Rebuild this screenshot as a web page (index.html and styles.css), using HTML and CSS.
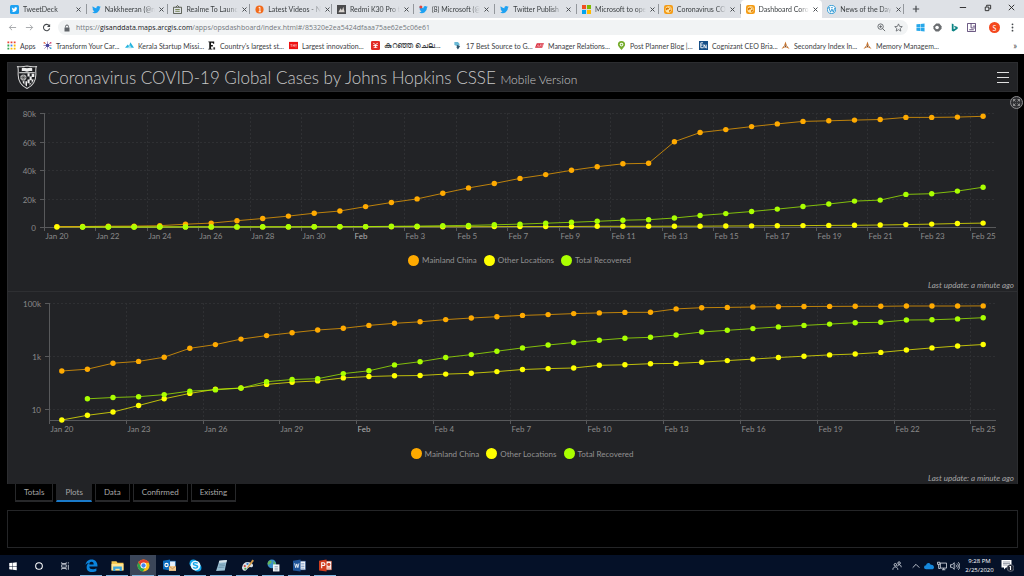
FILE: index.html
```
<!DOCTYPE html>
<html lang="en">
<head>
    <meta charset="UTF-8">
    <meta name="viewport" content="width=device-width, initial-scale=1.0">
    <title>Coronavirus COVID-19 Global Cases</title>
    <link rel="stylesheet" href="styles.css">
</head>
<body>
    <svg class="symbols" aria-hidden="true">
        <symbol id="bird" viewBox="0 0 24 24"><path d="M23.6 4.9c-.8.4-1.800.6-2.700.8 1-.6 1.700-1.500 2.100-2.600-.9.5-1.900.9-3 1.100A4.800 4.800 0 0 0 11.800 8.600C7.900 8.400 4.300 6.500 1.900 3.600c-1.300 2.200-.7 5 1.500 6.400-.8 0-1.500-.2-2.100-.6 0 2.300 1.600 4.300 3.800 4.700-.7.2-1.400.2-2.100.1.6 1.900 2.400 3.300 4.400 3.300A9.600 9.600 0 0 1 .4 19.500 13.500 13.500 0 0 0 21.200 7.500c.9-.7 1.700-1.500 2.400-2.600z"/></symbol>
        <symbol id="globe" viewBox="0 0 20 20"><rect width="20" height="20" rx="5" fill="#f59b13"/><circle cx="10" cy="10" r="7" fill="#ffe7a8"/><path d="M4 8c3-4 6-2 7-1s-1 3-3 3-3 3-4 1zM11 12c2-2 5-2 5-2s0 4-4 6zM12 4l4 3-3 1z" fill="#d97706"/></symbol>
        <symbol id="oracle" viewBox="0 0 20 20"><path d="M10 1l3 9h-6zM1 18l5-7 3 3zM19 18l-5-7-3 3z" fill="#c9742b"/><path d="M7 10h6l-3 5z" fill="#7d4a25"/></symbol>
        <symbol id="cross" viewBox="0 0 10 10"><path d="M1 1l8 8M9 1L1 9" stroke="#4b4f53" stroke-width="2"/></symbol>
    </svg>

    <header class="browser">
        <div class="tab-bar">
            <nav class="tabs">
                <div class="tab"><svg class="icon" viewBox="0 0 24 24"><rect width="24" height="24" rx="4" fill="#1da1f2"/><use href="#bird" x="4" y="4" width="16" height="16" fill="#fff"/></svg><span class="tab-title">TweetDeck</span><button class="close" aria-label="Close"><svg><use href="#cross"/></svg></button></div>
                <div class="tab"><svg class="icon twitter"><use href="#bird"/></svg><span class="tab-title">Nakkheeran (@n</span><button class="close" aria-label="Close"><svg><use href="#cross"/></svg></button></div>
                <div class="tab"><svg class="icon" viewBox="0 0 20 20"><path d="M6 5l4-4 4 4M1 5h18v14H1z" fill="none" stroke="#4d5145" stroke-width="2"/><path d="M5 10h10M5 14h10" stroke="#6b7a45" stroke-width="2"/></svg><span class="tab-title">Realme To Launc</span><button class="close" aria-label="Close"><svg><use href="#cross"/></svg></button></div>
                <div class="tab"><svg class="icon" viewBox="0 0 20 20"><circle cx="10" cy="10" r="9" fill="#f26a1b"/><path d="M8 6l3-1v10M8 15h5" stroke="#fff" stroke-width="2" fill="none"/></svg><span class="tab-title">Latest Videos - N</span><button class="close" aria-label="Close"><svg><use href="#cross"/></svg></button></div>
                <div class="tab"><svg class="icon" viewBox="0 0 20 20"><rect width="20" height="20" fill="#4a4a4c"/><path d="M3 16l5-9 3 5 3-8 3 12z" fill="#d9d4cf"/></svg><span class="tab-title">Redmi K30 Pro t</span><button class="close" aria-label="Close"><svg><use href="#cross"/></svg></button></div>
                <div class="tab"><svg class="icon twitter" viewBox="0 0 24 24"><use href="#bird"/><circle cx="5" cy="5" r="4" fill="#e0443e"/></svg><span class="tab-title">(8) Microsoft (@</span><button class="close" aria-label="Close"><svg><use href="#cross"/></svg></button></div>
                <div class="tab"><svg class="icon twitter"><use href="#bird"/></svg><span class="tab-title">Twitter Publish</span><button class="close" aria-label="Close"><svg><use href="#cross"/></svg></button></div>
                <div class="tab"><svg class="icon" viewBox="0 0 20 20"><path d="M0 0h9v9H0z" fill="#f25022"/><path d="M11 0h9v9h-9z" fill="#7fba00"/><path d="M0 11h9v9H0z" fill="#00a4ef"/><path d="M11 11h9v9h-9z" fill="#ffb900"/></svg><span class="tab-title">Microsoft to ope</span><button class="close" aria-label="Close"><svg><use href="#cross"/></svg></button></div>
                <div class="tab"><svg class="icon"><use href="#globe"/></svg><span class="tab-title">Coronavirus CO</span><button class="close" aria-label="Close"><svg><use href="#cross"/></svg></button></div>
                <div class="tab active"><svg class="icon"><use href="#globe"/></svg><span class="tab-title">Dashboard Coro</span><button class="close" aria-label="Close"><svg><use href="#cross"/></svg></button></div>
                <div class="tab"><svg class="icon" viewBox="0 0 20 20"><circle cx="10" cy="10" r="9" fill="#fff" stroke="#2795d4" stroke-width="2"/><path d="M4 6l4 10 3-7 3 7 3-9M3 6h4M9 6h4" fill="none" stroke="#2795d4" stroke-width="2"/></svg><span class="tab-title">News of the Day</span><button class="close" aria-label="Close"><svg><use href="#cross"/></svg></button></div>
            </nav>
            <button class="new-tab" aria-label="New tab"><svg viewBox="0 0 10 10"><path d="M5 1v8M1 5h8" stroke="#45494d" stroke-width="1.500"/></svg></button>
            <div class="window-controls">
                <button aria-label="Minimize"><svg viewBox="0 0 10 10"><path d="M2 5h7" stroke="#222"/></svg></button>
                <button aria-label="Restore"><svg viewBox="0 0 10 10"><path d="M2.500 4.500h4v4h-4zM4 4V2.500h4.500v4H7" fill="none" stroke="#222"/></svg></button>
                <button aria-label="Close window"><svg viewBox="0 0 10 10"><path d="M2 2l6 6M8 2L2 8" stroke="#222"/></svg></button>
            </div>
        </div>

        <div class="toolbar">
            <div class="nav-buttons">
                <button aria-label="Back"><svg viewBox="0 0 20 20"><path d="M18 10H3M9 4l-6 6 6 6" fill="none" stroke="#a0a3a6" stroke-width="2"/></svg></button>
                <button aria-label="Forward"><svg viewBox="0 0 20 20"><path d="M2 10h15M11 4l6 6-6 6" fill="none" stroke="#a0a3a6" stroke-width="2"/></svg></button>
                <button aria-label="Reload"><svg viewBox="0 0 20 20"><path d="M16 6a7 7 0 1 0 1 6" fill="none" stroke="#45494d" stroke-width="2.400"/><path d="M18 2v7h-7z" fill="#45494d"/></svg></button>
            </div>
            <div class="address">
                <svg class="lock" viewBox="0 0 16 16"><path d="M3 7h10v8H3z" fill="#5f6368"/><path d="M5 7V5a3 3 0 0 1 6 0v2" fill="none" stroke="#5f6368" stroke-width="2"/></svg>
                <a class="url" href="#">https://<b>gisanddata.maps.arcgis.com</b>/apps/opsdashboard/index.html#/85320e2ea5424dfaaa75ae62e5c06e61</a>
                <button aria-label="Zoom"><svg viewBox="0 0 20 20"><circle cx="8" cy="8" r="6" fill="none" stroke="#5f6368" stroke-width="2"/><path d="M12 12l6 6M5 8h6M8 5v6" stroke="#5f6368" stroke-width="2"/></svg></button>
                <button aria-label="Bookmark"><svg viewBox="0 0 20 20"><path d="M10 2l2.400 5.500 6 .5-4.600 4 1.400 6-5.200-3.200L4.800 18l1.400-6L1.600 8l6-.5z" fill="none" stroke="#5f6368" stroke-width="1.800"/></svg></button>
            </div>
            <div class="extensions">
                <button aria-label="Windows"><svg viewBox="0 0 20 20"><path d="M1 3l8-1v7H1zM10 2l9-1v8h-9zM1 10h8v8l-8-1zM10 10h9v9l-9-1z" fill="#28a8ea"/></svg></button>
                <button aria-label="Office"><svg viewBox="0 0 20 20"><path d="M7 1h7l5 6v6l-6 6H6l-5-6V7z" fill="#6a6d70"/><circle cx="9" cy="10" r="4" fill="#fff"/></svg></button>
                <button aria-label="Bing"><svg viewBox="0 0 20 20"><path d="M4 1l4 1.500V14l5-3-3-1.500L9 6l8 3v4l-9 6-4-2z" fill="#0c8484"/></svg></button>
                <button aria-label="OneNote"><svg viewBox="0 0 20 20"><path d="M1 1h18v18H1z" fill="none" stroke="#55406f" stroke-width="2"/><path d="M9 1v10h9M13 7h6M5 15h10" fill="none" stroke="#55406f" stroke-width="2"/></svg></button>
                <button class="avatar" aria-label="Profile">S</button>
                <button class="more" aria-label="Menu"><svg viewBox="0 0 20 20"><circle cx="10" cy="3" r="2"/><circle cx="10" cy="10" r="2"/><circle cx="10" cy="17" r="2"/></svg></button>
            </div>
        </div>

        <nav class="bookmarks">
            <a class="apps" href="#"><svg class="icon" viewBox="0 0 20 20"><path d="M1 1h4v4H1zM8 1h4v4H8zM15 1h4v4h-4z" fill="#ea4335"/><path d="M1 8h4v4H1zM1 15h4v4H1z" fill="#34a853"/><path d="M8 8h4v4H8z" fill="#4285f4"/><path d="M15 8h4v4h-4zM8 15h4v4H8zM15 15h4v4h-4z" fill="#fbbc05"/></svg><span>Apps</span></a>
            <a href="#"><svg class="icon" viewBox="0 0 20 20"><path d="M3 3l14 14M17 3L3 17M10 1v18M1 10h18" stroke="#8a65a8" stroke-width="1.500"/><circle cx="10" cy="10" r="4" fill="#44449c"/><circle cx="3" cy="4" r="2" fill="#ec6d3d"/><circle cx="17" cy="4" r="2" fill="#d54b75"/><circle cx="17" cy="16" r="2" fill="#38a3d3"/></svg><span>Transform Your Car...</span></a>
            <a href="#"><svg class="icon" viewBox="0 0 20 20"><path d="M0 15L6 8l3 3 3-8 8 12z" fill="#25b4df"/><path d="M5 16l6-7 4 7z" fill="#a5e2f2"/></svg><span>Kerala Startup Missi...</span></a>
            <a href="#"><svg class="icon" viewBox="0 0 20 20"><path d="M3 1h13v5h-2L12 4H9v5h4v3H9v5h3v2H3v-2h2V3H3z" fill="#111"/><path d="M14 14h4v5h-4z" fill="#333"/></svg><span>Country's largest st...</span></a>
            <a href="#"><svg class="icon" viewBox="0 0 20 20"><path d="M0 2h20v16H0z" fill="#ee1111"/><path d="M3 8h4M5 8v5M9 7v6M9 10h3M12 7v6M14 8h3M14 10h3M14 13h3" stroke="#fff"/></svg><span>Largest innovation...</span></a>
            <a href="#"><svg class="icon" viewBox="0 0 20 20"><rect width="20" height="20" rx="3" fill="#e22b26"/><path d="M5 5l5 3 5-3M5 10h10M6 14h8M10 8v7" fill="none" stroke="#fff" stroke-width="2"/></svg><span class="malayalam" lang="ml">കുറഞ്ഞ ചെല...</span></a>
            <a href="#"><svg class="icon" viewBox="0 0 20 20"><path d="M3 2h8l4 5-4 5-8-3z" fill="#69b9d6"/><path d="M9 9l7 2-5 8-3-4z" fill="#31566e"/></svg><span>17 Best Source to G...</span></a>
            <a href="#"><svg class="icon" viewBox="0 0 20 20"><path d="M4 5h16l-4 10H0z" fill="#d92a3b"/><path d="M4 13l3-5 1 5M10 13l2-5h2l-1 3h-2M15 13l2-5h2" fill="none" stroke="#fff"/></svg><span>Manager Relations...</span></a>
            <a href="#"><svg class="icon" viewBox="0 0 20 20"><path d="M10 20C5 14 2 12 2 8a8 8 0 0 1 16 0c0 4-3 6-8 12z" fill="#76ad2d"/><circle cx="10" cy="8" r="4" fill="#fff"/><circle cx="10" cy="8" r="2" fill="#76ad2d"/></svg><span>Post Planner Blog |...</span></a>
            <a href="#"><svg class="icon" viewBox="0 0 20 20"><path d="M0 0h20v20H0z" fill="#174f87"/><path d="M9 4H4v11h5M4 9h4M11 16V8l5 8V8" fill="none" stroke="#fff" stroke-width="2"/></svg><span>Cognizant CEO Bria...</span></a>
            <a href="#"><svg class="icon"><use href="#oracle"/></svg><span>Secondary Index In...</span></a>
            <a href="#"><svg class="icon"><use href="#oracle"/></svg><span>Memory Managem...</span></a>
            <button class="overflow" aria-label="More bookmarks">»</button>
        </nav>
    </header>

    <main class="dashboard">
        <div class="title-bar">
            <svg class="shield" viewBox="0 0 40 46"><path d="M2 3c6 1 10 1 18-1 8 2 12 2 18 1-2 4-1 8-1 15 0 14-7 22-17 27C10 40 3 32 3 18 3 11 4 7 2 3z" fill="#1b1c1f" stroke="#d5d5d5" stroke-width="2"/><path d="M10 6c4-2 7 0 10 0s6-2 10 0v6c-4-1-7 1-10 1s-6-2-10-1zM5 14h30v2H5z" fill="#eee"/><circle cx="13" cy="24" r="6" fill="#b5b5b5"/><path d="M13 18v12M7 24h12M9 20l8 8M17 20l-8 8" stroke="#444"/><path d="M21 16h4v6h-4zM29 17h5v6h-5zM25 22h4v7h-4zM21 28h4v7h-4zM29 28h4l-4 8zM11 32l4-2v8zM17 31h3v10l-3-2zM25 35h3l-3 5z" fill="#eee"/></svg>
            <h1>Coronavirus COVID-19 Global Cases by Johns Hopkins CSSE <a href="#">Mobile Version</a></h1>
            <button class="menu" aria-label="Menu"><span></span><span></span><span></span></button>
        </div>

        <div class="panel">
            <button class="expand" aria-label="Expand"><svg viewBox="0 0 26 26"><circle cx="13" cy="13" r="12" fill="#303134" stroke="#8d8d8f" stroke-width="2"/><path d="M7 11V7h4M15 7h4v4M19 15v4h-4M11 19H7v-4M7 7l4 4M19 7l-4 4M19 19l-4-4M7 19l4-4" fill="none" stroke="#aaa" stroke-width="1.500"/></svg></button>
            <section class="chart">
                <div class="plot" id="linearChart"></div>
                <ul class="legend">
                    <li class="china">Mainland China</li>
                    <li class="other">Other Locations</li>
                    <li class="recovered">Total Recovered</li>
                </ul>
                <p class="updated">Last update: a minute ago</p>
            </section>
            <section class="chart">
                <div class="plot" id="logChart"></div>
                <ul class="legend">
                    <li class="china">Mainland China</li>
                    <li class="other">Other Locations</li>
                    <li class="recovered">Total Recovered</li>
                </ul>
                <p class="updated">Last update: a minute ago</p>
            </section>
        </div>

        <div class="views">
            <button>Totals</button>
            <button class="selected">Plots</button>
            <button>Data</button>
            <button>Confirmed</button>
            <button>Existing</button>
        </div>

        <div class="footer-box"></div>
    </main>

    <footer class="taskbar">
        <div class="task-icons">
            <button aria-label="Start"><svg viewBox="0 0 24 24"><path d="M3 5l8-1v8H3zM12 4l9-1v9h-9zM3 13h8v8l-8-1zM12 13h9v9l-9-1z" fill="#fff"/></svg></button>
            <button aria-label="Search"><svg viewBox="0 0 24 24"><circle cx="12" cy="12" r="8" fill="none" stroke="#fff" stroke-width="2.500"/></svg></button>
            <button aria-label="Task view"><svg viewBox="0 0 24 24"><path d="M4 3v3h11V3M4 21v-3h11v3M4 9h11v6H4zM20 3v3M20 9v12" fill="none" stroke="#d5dae2" stroke-width="2"/></svg></button>
            <button class="open" aria-label="Edge"><svg viewBox="0 0 24 24"><path d="M1 11C2 4 7 1 12 1c7 0 11 5 11 11v2H8c0 4 3 5 6 5 3 0 5-1 7-2v5c-2 1-5 2-8 2-7 0-10-4-10-9 0-4 2-6 5-8-5 1-6 3-7 4zm7-1h8c0-3-1-5-4-5S8 7 8 10z" fill="#0b84dc"/></svg></button>
            <button class="open" aria-label="Explorer"><svg viewBox="0 0 24 24"><path d="M1 4h9l2 3h11v14H1z" fill="#f4c74e"/><path d="M1 9h22v12H1z" fill="#ffe596"/><path d="M4 14h16v8h-4v-4H8v4H4z" fill="#37a3dc"/></svg></button>
            <button class="open current" aria-label="Chrome"><svg viewBox="0 0 24 24"><circle cx="12" cy="12" r="11" fill="#fbc116"/><path d="M2.500 6.500A11 11 0 0 1 22 7H12L8 14z" fill="#e33b2e"/><path d="M2.500 6.500A11 11 0 0 0 11 23l5-8.500-8 0z" fill="#2aa24c"/><circle cx="12" cy="12" r="5.500" fill="#fff"/><circle cx="12" cy="12" r="4" fill="#4285f4"/></svg></button>
            <button class="open" aria-label="Outlook"><svg viewBox="0 0 24 24"><path d="M12 4h11v13H12z" fill="#e8f1fa" stroke="#1676c8"/><path d="M0 3l13-2v20L0 19z" fill="#0a6bbd"/><circle cx="6.500" cy="11" r="3" fill="none" stroke="#fff" stroke-width="2"/><path d="M11 13h13v9H11z" fill="#f5c98c"/><path d="M11 13l6.500 5 6.500-5" fill="none" stroke="#a46c30"/></svg></button>
            <button class="open" aria-label="Skype"><svg viewBox="0 0 24 24"><circle cx="8" cy="8" r="7" fill="#12a5e9"/><circle cx="16" cy="16" r="7" fill="#12a5e9"/><circle cx="12" cy="12" r="9" fill="#eaf8ff"/><path d="M16 8c-2-2-8-2-8 1s8 2 8 5-6 4-8 1" fill="none" stroke="#12a5e9" stroke-width="2.500"/></svg></button>
            <button class="open" aria-label="Notepad"><svg viewBox="0 0 24 24"><path d="M8 3l14-1-4 19-16 1z" fill="#98bed2"/><path d="M8 3l14-1-1 4-14 1z" fill="#d8e3e8"/><path d="M8 10l11-1M7 13l11-1M6 16l11-1" stroke="#547c94"/></svg></button>
            <button class="open" aria-label="Paint"><svg viewBox="0 0 24 24"><path d="M2 15C4 6 11 4 18 7s4 9 0 8-5 3-9 6-8-2-7-6z" fill="#d8dfe4"/><circle cx="7" cy="13" r="2" fill="#d0483b"/><circle cx="12" cy="9" r="2" fill="#3b7bc6"/><circle cx="8" cy="18" r="2" fill="#4ba34b"/><path d="M21 1l3 2-11 14-2-1z" fill="#d59a47"/></svg></button>
            <button class="open" aria-label="Server"><svg viewBox="0 0 24 24"><circle cx="9" cy="9" r="8" fill="#388fc9"/><path d="M3 4c4-3 7 0 5 3s-3 2-5 4c-3-2-2-5 0-7zM12 3l5 6-5 2z" fill="#65b65a"/><path d="M11 10h12v13H11z" fill="#f1f4f7"/><path d="M14 14h6M14 17h6M14 20h6" stroke="#53728c"/></svg></button>
            <button class="open" aria-label="Word"><svg viewBox="0 0 24 24"><path d="M12 4h11v16H12z" fill="#fff" stroke="#2b579a"/><path d="M15 8h6M15 11h6M15 14h6M15 17h6" stroke="#2b579a"/><path d="M0 3l14-2v22L0 21z" fill="#1d5296"/><path d="M3 8l2 8 2-7 2 7 2-8" fill="none" stroke="#fff" stroke-width="1.500"/></svg></button>
            <button class="open" aria-label="PowerPoint"><svg viewBox="0 0 24 24"><path d="M12 4h11v16H12z" fill="#fff" stroke="#d24625"/><circle cx="18" cy="10" r="3" fill="#d24625"/><path d="M15 15h6M15 18h6" stroke="#d24625"/><path d="M0 3l14-2v22L0 21z" fill="#d03c1e"/><path d="M5 17V7h3c4 0 4 5 0 5H5" fill="none" stroke="#fff" stroke-width="2"/></svg></button>
        </div>
        <div class="tray">
            <svg class="people" viewBox="0 0 24 24"><circle cx="17" cy="5" r="3"/><circle cx="8" cy="9" r="3"/><path d="M2 21c0-9 12-9 12 0M13 13c2-6 9-5 9 2"/></svg>
            <svg class="chevron" viewBox="0 0 24 24"><path d="M4 16l8-8 8 8"/></svg>
            <svg class="cloud" viewBox="0 0 24 24"><path d="M5 20a5 5 0 0 1 0-10C6 4 14 3 16 9c5-1 8 3 8 6s-2 5-5 5z"/></svg>
            <svg viewBox="0 0 24 24"><path d="M8 5h15v12H8zM12 21h8M16 17v4M1 3h6v5H1zM4 8v10h4"/></svg>
            <svg viewBox="0 0 24 24"><path d="M1 9h4l5-5v16l-5-5H1zM14 9c2 2 2 4 0 6M17 6c4 4 4 8 0 12M20 3c5 6 5 12 0 18"/></svg>
            <time class="clock">9:28 PM<br>2/25/2020</time>
            <button class="notice" aria-label="Notifications"><svg viewBox="0 0 26 26"><path d="M1 2h20v15H10l-4 4v-4H1z" fill="#fff"/><path d="M4 6h14M4 9h14M4 12h9" stroke="#7d8493" stroke-width="1.500"/><circle cx="19" cy="18" r="7" fill="#272c3a" stroke="#8c93a1"/><path d="M17 16l2-2v8" fill="none" stroke="#fff" stroke-width="2"/></svg></button>
        </div>
    </footer>

    <script src="charts.js"></script>
</body>
</html>
```
FILE: styles.css
```
* {
    box-sizing: border-box;
}

body {
    margin: 0;
    min-height: 100vh;
    display: flex;
    flex-direction: column;
    background: #000;
    font-family: Lato, sans-serif;
    font-size: 8px;
}

button {
    display: flex;
    align-items: center;
    justify-content: center;
    padding: 0;
    border: 0;
    background: none;
    color: inherit;
    font: inherit;
}

a {
    color: inherit;
    text-decoration: none;
}

.symbols {
    display: none;
}

/* Browser */
.browser {
    background: #fff;
    color: #3c4043;
    font-size: 7px;
}

.tab-bar {
    display: flex;
    height: 18px;
    padding-left: 5px;
    background: #dee1e6;
}

.tabs {
    flex: 1;
    display: grid;
    grid-template-columns: repeat(11, minmax(0, 1fr));
}

.tab {
    position: relative;
    display: flex;
    align-items: center;
    gap: 4px;
    padding: 0 6px 0 5px;
}

.tab::after {
    content: '';
    position: absolute;
    right: 0;
    top: 4px;
    width: 1px;
    height: 10px;
    background: #93979c;
}

.tab.active {
    background: #fff;
    border-radius: 4px 4px 0 0;
}

.tab.active::after {
    display: none;
}

.icon {
    flex: none;
    width: 9px;
    height: 9px;
}

.twitter {
    fill: #1da1f2;
}

.tab-title {
    flex: 1;
    white-space: nowrap;
    mask-image: linear-gradient(to right, #000 80%, transparent);
}

.close,
.close svg {
    width: 5px;
    height: 5px;
}

.new-tab {
    width: 24px;
}

.new-tab svg {
    width: 8px;
    height: 8px;
}

.window-controls {
    display: flex;
    width: 96px;
    padding-left: 22px;
}

.window-controls button {
    flex: 1;
    height: 15px;
}

.window-controls svg {
    width: 9px;
    height: 9px;
}

.toolbar {
    display: flex;
    align-items: center;
    height: 19px;
}

.nav-buttons {
    display: flex;
    gap: 8px;
    width: 58px;
    padding-left: 8px;
}

.toolbar svg {
    width: 9px;
    height: 9px;
}

.address {
    flex: 1;
    display: flex;
    align-items: center;
    gap: 8px;
    height: 15px;
    padding: 0 5px;
    border-radius: 8px;
    background: #f1f3f4;
}

.address .lock {
    width: 8px;
    height: 8px;
}

.url {
    flex: 1;
    margin-left: -3px;
    color: #74797e;
    font-family: "Open Sans", sans-serif;
}

.url b {
    color: #202124;
    font-weight: 400;
}

.extensions {
    display: flex;
    align-items: center;
    gap: 8px;
    padding: 0 7px 0 8px;
}

.avatar {
    width: 11px;
    height: 11px;
    margin-left: 5px;
    border-radius: 50%;
    background: #f4481e;
    color: #fff;
}

.more {
    fill: #45494d;
}

.bookmarks {
    display: flex;
    align-items: center;
    height: 17px;
    padding: 0 7px;
}

.bookmarks a {
    flex: 0 1 82px;
    display: flex;
    align-items: center;
    gap: 4px;
    min-width: 0;
    white-space: nowrap;
}

.bookmarks .apps {
    flex-basis: 36px;
}

.malayalam {
    font-size: 8px;
}

.overflow {
    margin-left: auto;
    font-size: 9px;
}

/* Dashboard */
.dashboard {
    flex: 1;
    display: flex;
    flex-direction: column;
    padding: 8px 6px 7px 7px;
    color: #a6a6a6;
}

.title-bar {
    display: flex;
    align-items: center;
    gap: 10px;
    height: 30px;
    margin-bottom: 7px;
    padding: 0 8px;
    border: 1px solid #2c2d30;
    background: #222326;
}

.shield {
    width: 22px;
    height: 24px;
}

h1 {
    flex: 1;
    margin: 0;
    color: #c8c8c8;
    font-size: 17px;
    font-weight: 300;
}

h1 a {
    font-size: 12px;
}

.menu {
    flex-direction: column;
    gap: 4px;
}

.menu span {
    width: 12px;
    height: 1px;
    background: #e0e0e0;
}

.panel {
    position: relative;
    flex: 1;
    display: flex;
    flex-direction: column;
    border: 1px solid #2c2d30;
    border-bottom: 0;
    background: #222326;
}

.expand {
    position: absolute;
    top: -4px;
    right: -6px;
}

.expand svg {
    width: 13px;
    height: 13px;
}

.chart {
    flex: auto;
    display: flex;
    flex-direction: column;
}

.chart + .chart {
    border-top: 1px solid #2e2f32;
}

.plot svg {
    display: block;
    width: 100%;
}

.plot text {
    fill: #8a8a8a;
    font-size: 8px;
}

.plot .month {
    fill: #b0b0b0;
}

.grid {
    stroke: #2f3033;
    stroke-dasharray: 2 2;
}

.axis {
    stroke: #58595b;
}

.series polyline {
    fill: none;
    stroke-opacity: 0.7;
}

.china {
    --series: #ffaa00;
}

.other {
    --series: #ffff00;
}

.recovered {
    --series: #aaff00;
}

.series {
    fill: var(--series);
    stroke: var(--series);
}

.series circle {
    stroke: none;
}

.legend {
    display: flex;
    justify-content: center;
    gap: 7px;
    margin: 0;
    padding: 0 22px 0 36px;
    list-style: none;
    color: #929292;
    line-height: 12px;
}

.chart + .chart .legend {
    padding-left: 41px;
}

.legend li {
    display: flex;
    align-items: center;
    gap: 3px;
}

.legend li::before {
    content: '';
    width: 11px;
    height: 11px;
    border-radius: 50%;
    background: var(--series);
}

.updated {
    margin: auto 3px 0 0;
    font-style: italic;
    line-height: 11px;
    text-align: right;
}

.views {
    display: flex;
    gap: 3px;
    margin-bottom: 8px;
    padding-left: 8px;
}

.views button {
    height: 18px;
    padding: 0 8px;
    border: 1px solid #27282a;
    border-top: 0;
    border-bottom-width: 2px;
}

.views .selected {
    border-color: #222326;
    border-bottom-color: #1a7ac9;
    background: #222326;
}

.footer-box {
    height: 38px;
    border: 1px solid #242527;
}

/* Taskbar */
.taskbar {
    display: flex;
    justify-content: space-between;
    height: 21px;
    background: #051128;
    color: #fff;
    font-family: "Open Sans", sans-serif;
}

.task-icons {
    display: flex;
}

.task-icons button {
    position: relative;
    width: 26px;
}

.task-icons svg {
    width: 13px;
    height: 13px;
}

.task-icons button:nth-child(-n+3) svg {
    width: 10px;
    height: 10px;
}

.task-icons .current {
    background: #3b4659;
}

.open::after {
    content: '';
    position: absolute;
    left: 2px;
    right: 2px;
    bottom: 0;
    height: 1px;
    background: #83b9e3;
}

.tray {
    display: flex;
    align-items: center;
    gap: 3px;
    padding-right: 10px;
}

.tray > svg {
    width: 10px;
    height: 10px;
    fill: none;
    stroke: #dce1e9;
    stroke-width: 2;
}

.tray .people {
    margin-right: 6px;
}

.tray .cloud {
    fill: #1688dc;
    stroke: none;
}

.clock {
    width: 33px;
    font-size: 6px;
    line-height: 9px;
    text-align: center;
}

.notice {
    margin-left: 2px;
}

.notice svg {
    width: 13px;
    height: 13px;
}
```
FILE: charts.js
```
const china = [278, 326, 547, 639, 916, 1979, 2737, 4409, 5970, 7678, 9658, 11221, 14341, 17187, 19693, 23680, 27409, 30553, 34075, 36778, 39790, 42306, 44327, 44699, 59832, 66292, 68347, 70446, 72364, 74139, 74546, 74999, 75472, 76922, 76938, 77152, 77660];
const other = [4, 6, 8, 14, 25, 40, 57, 64, 87, 105, 118, 153, 173, 183, 188, 212, 227, 265, 317, 343, 361, 457, 476, 523, 538, 595, 685, 780, 896, 999, 1124, 1212, 1385, 1715, 2055, 2429, 2764];
const recovered = [null, 25, 28, 30, 36, 49, 54, 63, 110, 133, 143, 222, 284, 472, 623, 892, 1153, 1540, 2050, 2649, 3281, 3996, 4749, 5150, 6295, 8096, 9419, 10865, 12583, 14376, 16121, 18177, 18890, 22886, 23394, 25227, 27905];

// Label for the day that is i days after Jan 20
function dayLabel(i) {
    if (i < 12) return "Jan " + (20 + i);
    return i === 12 ? "Feb" : "Feb " + (i - 11);
}

function drawChart(id, options) {
    const box = document.getElementById(id);
    const width = box.clientWidth;
    const { left, top, bottom, step, ticks, scale } = options;
    const right = width - 21;
    const band = (right - left) / china.length;
    const y = v => bottom - scale(v) * (bottom - top);
    let out = "";

    ticks.forEach(([value, label]) => {
        const ty = Math.round(y(value)) + 0.5;
        out += `<line class="grid" x1="${left}" x2="${right}" y1="${ty}" y2="${ty}"/>`;
        out += `<line class="axis" x1="${left - 4}" x2="${left}" y1="${ty}" y2="${ty}"/>`;
        out += `<text x="${left - 8}" y="${ty + 3}" text-anchor="end">${label}</text>`;
    });

    for (let i = 0; i < china.length; i += step) {
        const x = Math.round(left + i * band) + 0.5;
        if (i > 0) out += `<line class="grid" x1="${x}" x2="${x}" y1="${top}" y2="${bottom}"/>`;
        out += `<line class="axis" x1="${x}" x2="${x}" y1="${bottom}" y2="${bottom + 4}"/>`;
        out += `<text class="${i === 12 ? "month" : ""}" x="${x + 1}" y="${bottom + 12}">${dayLabel(i)}</text>`;
    }

    out += `<path class="axis" fill="none" d="M${left + 0.5} ${top}V${bottom + 0.5}H${right}"/>`;

    [["china", china], ["other", other], ["recovered", recovered]].forEach(([name, values]) => {
        const points = values
            .map((v, i) => v === null ? null : [(left + (i + 0.5) * band).toFixed(1), y(v).toFixed(1)])
            .filter(p => p);
        out += `<g class="series ${name}"><polyline points="${points.join(" ")}"/>`;
        out += points.map(p => `<circle cx="${p[0]}" cy="${p[1]}" r="2.7"/>`).join("") + "</g>";
    });

    box.innerHTML = `<svg height="${options.height}">${out}</svg>`;
}

function drawAll() {
    drawChart("linearChart", {
        left: 36, top: 13, bottom: 127, height: 154, step: 2,
        ticks: [[0, "0"], [20000, "20k"], [40000, "40k"], [60000, "60k"], [80000, "80k"]],
        scale: v => v / 80000
    });
    drawChart("logChart", {
        left: 41, top: 11, bottom: 128, height: 156, step: 3,
        ticks: [[10, "10"], [1000, "1k"], [100000, "100k"]],
        scale: v => Math.log10(v / 4) / Math.log10(25000)
    });
}

drawAll();
window.addEventListener("resize", drawAll);
```
